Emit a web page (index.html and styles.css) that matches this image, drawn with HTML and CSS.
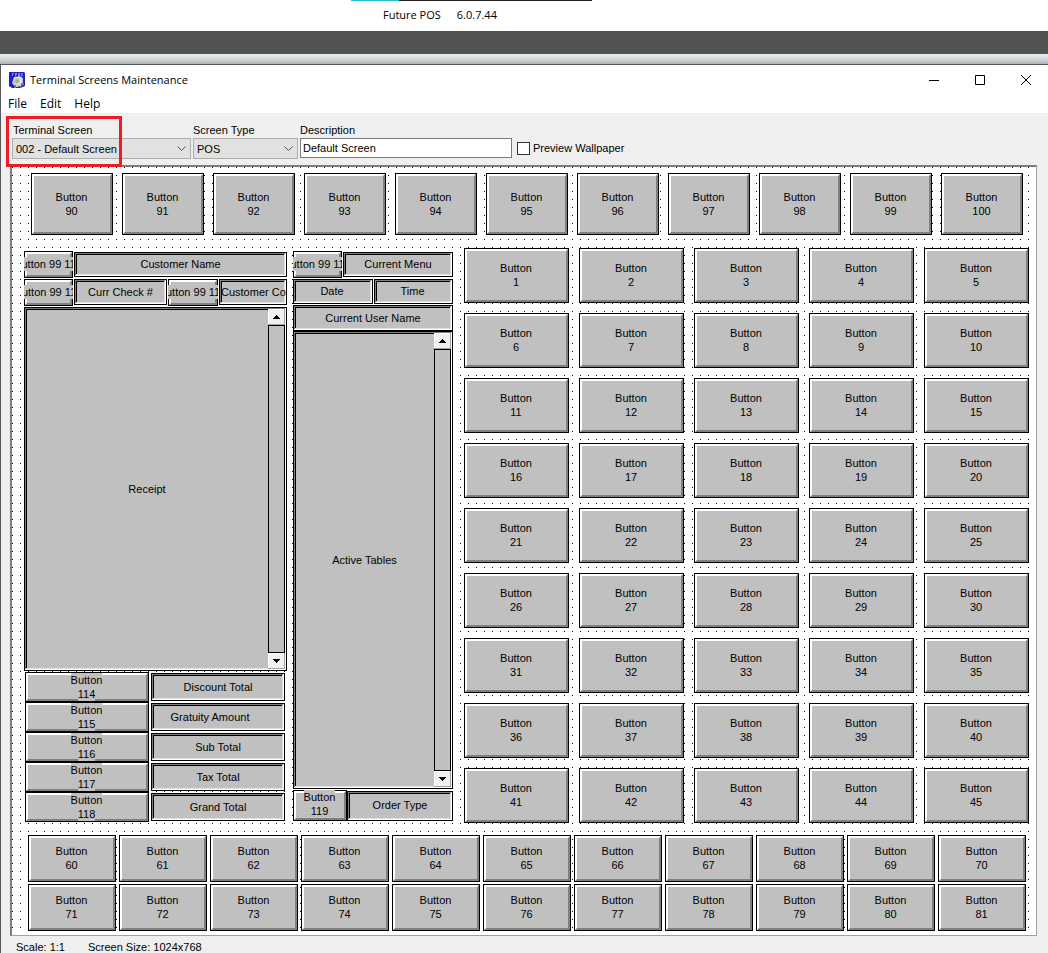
FILE: index.html
```html
<!DOCTYPE html>
<html lang="en">
<head>
<meta charset="utf-8">
<title>Terminal Screens Maintenance</title>
<link rel="stylesheet" href="styles.css">
</head>
<body>
<header class="backdrop">
  <div class="progress"><span class="progress-done"></span></div>
  <p class="version"><span>Future POS</span><span>6.0.7.44</span></p>
</header>
<div class="desk-band"></div>
<div class="window-shadow"></div>
<main class="window">
  <div class="titlebar">
    <svg class="app-icon" viewBox="0 0 16 16" aria-hidden="true">
      <path d="M0 0h15l1 1v13l-5 2H3l-3-2z" fill="#1f1fd0"/>
      <path d="M3 1h2v1H4v2H3zM6 1h2v2H7v1H6zM9 1h2v3H9zM12 1h2v1h-1v1h1v1h-2z" fill="#7884f0"/>
      <path d="M5 5l6-1 3 2v6l-3 3H6l-3-4z" fill="#c9cbc4"/>
      <path d="M5 6l2-1 4 0 2 3-1 4-3 1-3-1-1-3z" fill="#dddfd6"/>
      <circle cx="8" cy="9" r="2" fill="#efefe9" stroke="#a0a29a"/>
      <circle cx="8" cy="9" r="1" fill="#888"/>
      <path d="M5 13h2v3H5zM12 11h3v2h-3zM9 14h2v1H9z" fill="#777b88"/>
    </svg>
    <h1>Terminal Screens Maintenance</h1>
    <div class="window-controls">
      <button type="button" aria-label="Minimize"><svg viewBox="0 0 10 10"><path d="M0 5.500h10"/></svg></button>
      <button type="button" aria-label="Maximize"><svg viewBox="0 0 10 10"><path d="M.5.5h9v9h-9z"/></svg></button>
      <button type="button" aria-label="Close"><svg viewBox="0 0 10 10"><path d="M0 0l10 10M10 0L0 10"/></svg></button>
    </div>
  </div>
  <nav class="menubar">
    <button type="button">File</button><button type="button">Edit</button><button type="button">Help</button>
  </nav>
  <div class="workspace">
    <form class="toolbar">
      <div class="field field-screen">
        <label for="screen">Terminal Screen</label>
        <select id="screen"><option>002 - Default Screen</option></select>
        <div class="highlight"></div>
      </div>
      <div class="field field-type">
        <label for="type">Screen Type</label>
        <select id="type"><option>POS</option></select>
      </div>
      <div class="field field-desc">
        <label for="desc">Description</label>
        <input id="desc" type="text" value="Default Screen">
      </div>
      <label class="check"><input type="checkbox">Preview Wallpaper</label>
    </form>

    <section class="canvas">
      <div class="row-top">
        <button class="key"><span>Button</span><span>90</span></button>
        <button class="key"><span>Button</span><span>91</span></button>
        <button class="key"><span>Button</span><span>92</span></button>
        <button class="key"><span>Button</span><span>93</span></button>
        <button class="key"><span>Button</span><span>94</span></button>
        <button class="key"><span>Button</span><span>95</span></button>
        <button class="key"><span>Button</span><span>96</span></button>
        <button class="key"><span>Button</span><span>97</span></button>
        <button class="key"><span>Button</span><span>98</span></button>
        <button class="key"><span>Button</span><span>99</span></button>
        <button class="key"><span>Button</span><span>100</span></button>
      </div>

      <div class="middle">
        <div class="check-panel">
          <div class="line line-name">
            <button class="key"><span>Button 99 110</span></button>
            <div class="well">Customer Name</div>
          </div>
          <div class="line line-check">
            <button class="key"><span>Button 99 111</span></button>
            <div class="well">Curr Check #</div>
            <button class="key"><span>Button 99 112</span></button>
            <div class="well well-tight">Customer Co</div>
          </div>
          <div class="well list receipt">
            <span>Receipt</span>
            <div class="scroll"><button aria-label="Scroll receipt up"><svg viewBox="0 0 7 4"><path d="M3 0h1v1h1v1h1v1h1v1H0V3h1V2h1V1h1z"/></svg></button><i></i><button aria-label="Scroll receipt down"><svg viewBox="0 0 7 4"><path d="M0 0h7v1H6v1H5v1H4v1H3V3H2V2H1V1H0z"/></svg></button></div>
          </div>
          <div class="totals">
            <button class="key"><span>Button</span><span>114</span></button><div class="well">Discount Total</div>
            <button class="key"><span>Button</span><span>115</span></button><div class="well well-gratuity">Gratuity Amount</div>
            <button class="key"><span>Button</span><span>116</span></button><div class="well">Sub Total</div>
            <button class="key"><span>Button</span><span>117</span></button><div class="well">Tax Total</div>
            <button class="key"><span>Button</span><span>118</span></button><div class="well">Grand Total</div>
          </div>
        </div>

        <div class="table-panel">
          <div class="line line-name">
            <button class="key"><span>Button 99 113</span></button>
            <div class="well">Current Menu</div>
          </div>
          <div class="line line-clock">
            <div class="well">Date</div>
            <div class="well">Time</div>
          </div>
          <div class="well user">Current User Name</div>
          <div class="well list tables">
            <span>Active Tables</span>
            <div class="scroll"><button aria-label="Scroll tables up"><svg viewBox="0 0 7 4"><path d="M3 0h1v1h1v1h1v1h1v1H0V3h1V2h1V1h1z"/></svg></button><i></i><button aria-label="Scroll tables down"><svg viewBox="0 0 7 4"><path d="M0 0h7v1H6v1H5v1H4v1H3V3H2V2H1V1H0z"/></svg></button></div>
          </div>
          <div class="line line-order">
            <button class="key"><span>Button</span><span>119</span></button>
            <div class="well">Order Type</div>
          </div>
        </div>

        <div class="keypad">
          <button class="key"><span>Button</span><span>1</span></button>
          <button class="key"><span>Button</span><span>2</span></button>
          <button class="key"><span>Button</span><span>3</span></button>
          <button class="key"><span>Button</span><span>4</span></button>
          <button class="key"><span>Button</span><span>5</span></button>
          <button class="key"><span>Button</span><span>6</span></button>
          <button class="key"><span>Button</span><span>7</span></button>
          <button class="key"><span>Button</span><span>8</span></button>
          <button class="key"><span>Button</span><span>9</span></button>
          <button class="key"><span>Button</span><span>10</span></button>
          <button class="key"><span>Button</span><span>11</span></button>
          <button class="key"><span>Button</span><span>12</span></button>
          <button class="key"><span>Button</span><span>13</span></button>
          <button class="key"><span>Button</span><span>14</span></button>
          <button class="key"><span>Button</span><span>15</span></button>
          <button class="key"><span>Button</span><span>16</span></button>
          <button class="key"><span>Button</span><span>17</span></button>
          <button class="key"><span>Button</span><span>18</span></button>
          <button class="key"><span>Button</span><span>19</span></button>
          <button class="key"><span>Button</span><span>20</span></button>
          <button class="key"><span>Button</span><span>21</span></button>
          <button class="key"><span>Button</span><span>22</span></button>
          <button class="key"><span>Button</span><span>23</span></button>
          <button class="key"><span>Button</span><span>24</span></button>
          <button class="key"><span>Button</span><span>25</span></button>
          <button class="key"><span>Button</span><span>26</span></button>
          <button class="key"><span>Button</span><span>27</span></button>
          <button class="key"><span>Button</span><span>28</span></button>
          <button class="key"><span>Button</span><span>29</span></button>
          <button class="key"><span>Button</span><span>30</span></button>
          <button class="key"><span>Button</span><span>31</span></button>
          <button class="key"><span>Button</span><span>32</span></button>
          <button class="key"><span>Button</span><span>33</span></button>
          <button class="key"><span>Button</span><span>34</span></button>
          <button class="key"><span>Button</span><span>35</span></button>
          <button class="key"><span>Button</span><span>36</span></button>
          <button class="key"><span>Button</span><span>37</span></button>
          <button class="key"><span>Button</span><span>38</span></button>
          <button class="key"><span>Button</span><span>39</span></button>
          <button class="key"><span>Button</span><span>40</span></button>
          <button class="key"><span>Button</span><span>41</span></button>
          <button class="key"><span>Button</span><span>42</span></button>
          <button class="key"><span>Button</span><span>43</span></button>
          <button class="key"><span>Button</span><span>44</span></button>
          <button class="key"><span>Button</span><span>45</span></button>
        </div>
      </div>

      <div class="rows-bottom">
        <button class="key"><span>Button</span><span>60</span></button>
        <button class="key"><span>Button</span><span>61</span></button>
        <button class="key"><span>Button</span><span>62</span></button>
        <button class="key"><span>Button</span><span>63</span></button>
        <button class="key"><span>Button</span><span>64</span></button>
        <button class="key"><span>Button</span><span>65</span></button>
        <button class="key"><span>Button</span><span>66</span></button>
        <button class="key"><span>Button</span><span>67</span></button>
        <button class="key"><span>Button</span><span>68</span></button>
        <button class="key"><span>Button</span><span>69</span></button>
        <button class="key"><span>Button</span><span>70</span></button>
        <button class="key"><span>Button</span><span>71</span></button>
        <button class="key"><span>Button</span><span>72</span></button>
        <button class="key"><span>Button</span><span>73</span></button>
        <button class="key"><span>Button</span><span>74</span></button>
        <button class="key"><span>Button</span><span>75</span></button>
        <button class="key"><span>Button</span><span>76</span></button>
        <button class="key"><span>Button</span><span>77</span></button>
        <button class="key"><span>Button</span><span>78</span></button>
        <button class="key"><span>Button</span><span>79</span></button>
        <button class="key"><span>Button</span><span>80</span></button>
        <button class="key"><span>Button</span><span>81</span></button>
      </div>
    </section>
    <footer class="status"><span>Scale: 1:1</span><span>Screen Size: 1024x768</span></footer>
  </div>
</main>
</body>
</html>
```
FILE: styles.css
```css
* { box-sizing: border-box; }

body {
  margin: 0;
  background: #fff;
  color: #000;
  font: 11px/14px "Liberation Sans", Arial, sans-serif;
}

button, input, select { font: inherit; color: inherit; margin: 0; padding: 0; border-radius: 0; }
button { border: 0; background: none; }

/* Strip of the page behind the window */
.backdrop { height: 31px; }
.progress { width: 241px; height: 1px; margin-left: 351px; background: #231f20; }
.progress-done { display: block; width: 48px; height: 1px; background: #2bb9cf; }
.version {
  display: flex;
  gap: 16px;
  margin: 0;
  padding: 6px 0 0 383px;
  font: 11px/16px "Open Sans", sans-serif;
}
.desk-band { height: 23px; background: #525252; }
.window-shadow { height: 10px; background: linear-gradient(#e9ecea, #d5d9dc 50%, #adb1b6); }

/* Window frame */
.window { border: solid #55585a; border-width: 1px 0 0 1px; }
.titlebar { display: flex; align-items: center; height: 29px; padding-left: 8px; }
.app-icon { width: 16px; height: 16px; margin-right: 5px; }
.titlebar h1 { flex: 1; margin: 0; font: 11px/16px "Open Sans", sans-serif; }
.window-controls { display: flex; margin-right: -1px; }
.window-controls button { display: grid; place-items: center; width: 46px; height: 28px; }
.window-controls svg { width: 10px; height: 10px; fill: none; stroke: #000; overflow: visible; }
.menubar { display: flex; gap: 13px; height: 19px; padding-left: 7px; }
.menubar button { height: 19px; padding-top: 1px; font: 12px/18px "Open Sans", sans-serif; }
.workspace { padding: 0 11px 0 9px; background: #efefef; }

/* Toolbar */
.toolbar { display: flex; gap: 2px; height: 52px; padding: 10px 0 0 2px; }
.field { position: relative; display: flex; flex-direction: column; gap: 1px; }
.field label { height: 14px; padding-left: 1px; }
.field-screen { width: 179px; }
.field-type { width: 105px; }
.field-type label, .field-desc label { padding-left: 0; }
.field-desc { width: 212px; }
.field select, .field input { height: 21px; border: 1px solid #adadad; }
.field select {
  appearance: none;
  padding: 0 20px 0 3px;
  background: #e1e1e1 url("data:image/svg+xml,%3Csvg xmlns='http://www.w3.org/2000/svg' width='9' height='6' viewBox='0 0 9 6'%3E%3Cpath d='M.5.5l4 4 4-4' fill='none' stroke='%23555'/%3E%3C/svg%3E") no-repeat right 4px center;
}
.field input { height: 20px; padding: 0 2px; background: #fff; border-color: #7a7a7a; }
.highlight {
  position: absolute;
  top: -7px;
  left: -6px;
  width: 116px;
  height: 51px;
  border: 3px solid #ed1c24;
  z-index: 2;
  pointer-events: none;
}
.check { display: flex; align-items: center; gap: 3px; height: 20px; margin: 15px 0 0 3px; }
.check input { appearance: none; width: 13px; height: 13px; border: 1px solid #333; background: #fff; }

/* Screen design surface with its dotted grid */
.canvas {
  padding: 6px 7px 4px 12px;
  border: 1px solid #a0a0a0;
  border-top: 2px solid #7c7c7c;
  border-left: 2px solid #7c7c7c;
  background: #fff conic-gradient(from 270deg at 1px 1px, #000 90deg, transparent 0) 0 0 / 8px 8px;
}
.row-top { display: grid; grid-template-columns: repeat(11, 1fr); grid-auto-rows: 62px; gap: 9px; padding: 0 6px 0 7px; }
.middle { display: flex; margin: 13px 0 12px; }
.rows-bottom { display: grid; grid-template-columns: repeat(11, 1fr); grid-auto-rows: 47px; gap: 2px 3px; padding: 0 3px 0 4px; }
.keypad { flex: 1; display: grid; grid-template-columns: repeat(5, 1fr); grid-auto-rows: 55px; gap: 10px; margin-left: 11px; }

/* Raised keys */
.key {
  position: relative;
  display: flex;
  flex-direction: column;
  align-items: center;
  justify-content: center;
  min-width: 0;
  padding-right: 1px;
  overflow: hidden;
  background: #c0c0c0;
  box-shadow: inset 0 0 0 1px #000;
}
.key::before {
  content: "";
  position: absolute;
  inset: 1px;
  border: 2px solid;
  border-color: #fff #808080 #808080 #fff;
}
.key span { position: relative; flex: none; background: #c0c0c0; white-space: nowrap; }
.keypad .key, .rows-bottom .key, .line .key { padding-bottom: 1px; }

/* Sunken fields */
.well {
  display: flex;
  align-items: center;
  justify-content: center;
  min-width: 0;
  overflow: hidden;
  background: #c0c0c0;
  white-space: nowrap;
  box-shadow: inset 0 0 0 1px #000, inset -2px -2px #fff, inset 2px 2px #808080, inset -3px -3px #dfdfdf, inset 3px 3px #000;
}
.well-tight { justify-content: flex-start; padding-left: 2px; }
.well-gratuity { padding-right: 16px; }

.check-panel, .table-panel { display: flex; flex-direction: column; padding-top: 3px; }
.check-panel { width: 263px; }
.table-panel { width: 160px; margin-left: 6px; }
.line { display: grid; column-gap: 1px; align-items: start; }
.line-name { grid-template-columns: 49px 1fr; height: 28px; }
.line-name .key, .line-check .key { height: 27px; }
.line-name .well { height: 25px; margin-top: 1px; padding-bottom: 1px; }
.line-check { grid-template-columns: 49px 93px 50px 1fr; height: 28px; }
.line-check .well { height: 26px; }
.line-clock { grid-template-columns: 80px 1fr; height: 26px; }
.line-clock .well { height: 25px; padding: 0 2px 1px 0; }
.user { height: 26px; }

/* Lists with a scroll bar */
.list { align-items: stretch; padding: 2px; }
.list > span { flex: 1; align-self: center; text-align: center; }
.receipt { height: 364px; }
.tables { height: 458px; }
.scroll { display: flex; flex-direction: column; width: 17px; }
.scroll i { flex: 1; border: 1px solid #000; background: #c0c0c0; }
.scroll button {
  display: grid;
  place-items: center;
  height: 16px;
  background: #f0f0f0;
  box-shadow: inset -1px -1px #a0a0a0, inset 1px 1px #fff;
}
.scroll svg { width: 7px; height: 4px; shape-rendering: crispEdges; }

.totals { display: grid; grid-template-columns: 124px 134px; grid-auto-rows: 30px; column-gap: 2px; padding: 1px 0 0 1px; }
.totals .well { margin: 1px 0; }
.line-order { grid-template-columns: 54px 1fr; column-gap: 0; height: 31px; margin-top: 1px; }
.line-order .key { height: 31px; padding-bottom: 3px; }
.line-order .well { height: 30px; margin-top: 1px; padding-bottom: 2px; }

.status { display: flex; gap: 23px; height: 17px; padding: 4px 0 0 6px; white-space: nowrap; }
.status span { line-height: 14px; }
```
